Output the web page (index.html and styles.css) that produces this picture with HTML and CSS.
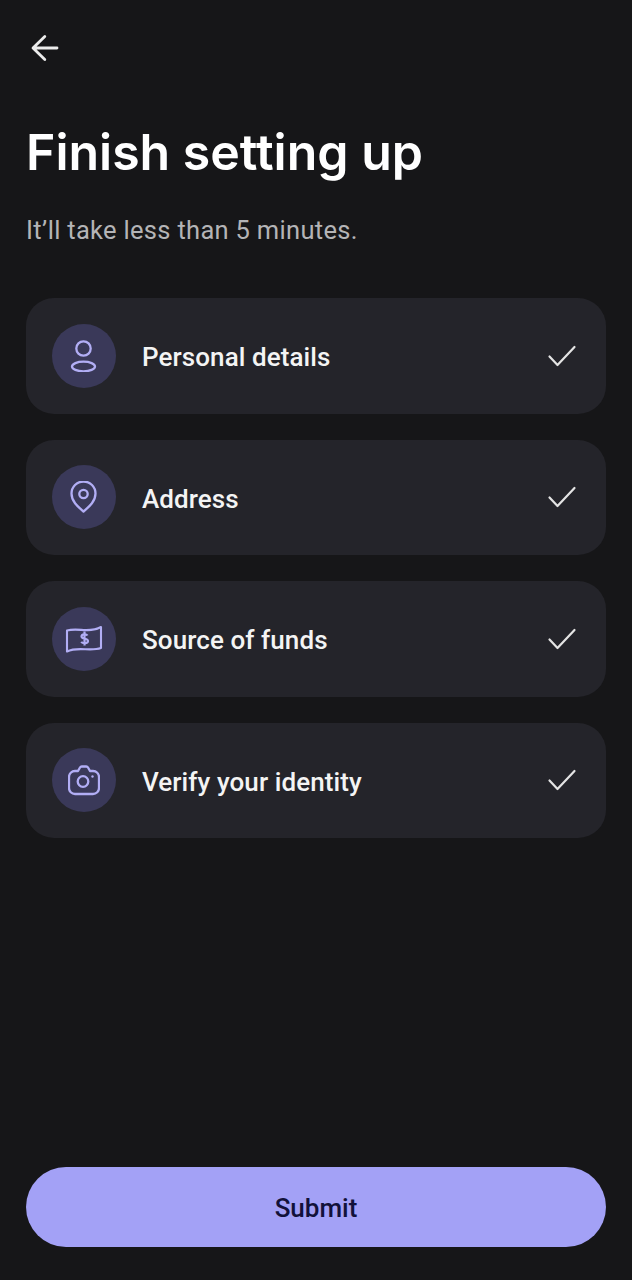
FILE: index.html
```html
<!DOCTYPE html>
<html>
	<head>
		<title>Finish setting up</title>
		<link rel="stylesheet" href="styles.css">
	</head>
	<body>
		<div class="screen">
			<svg class="back" viewBox="0 0 32 32" fill="none" stroke="#ececec" stroke-width="2.800" stroke-linecap="round" stroke-linejoin="round">
				<path d="M28 16H4.500M15.800 4.500 4 16l11.800 11.500"/>
			</svg>
			<h1 class="title">Finish setting up</h1>
			<p class="subtitle">It’ll take less than 5 minutes.</p>
			<div class="steps">
				<div class="step">
					<span class="step-icon">
						<svg viewBox="0 0 32 32" fill="none" stroke="#b2aef5" stroke-width="2.300">
							<circle cx="15.500" cy="8.500" r="7.200"/>
							<ellipse cx="15.500" cy="26.500" rx="11.500" ry="4.800"/>
						</svg>
					</span>
					<span class="step-name">Personal details</span>
					<svg class="check" viewBox="0 0 30 24" fill="none" stroke="#e4e4e4" stroke-width="2.200" stroke-linecap="round" stroke-linejoin="round"><path d="M2.500 12.500l8 8.500L27.500 3"/></svg>
				</div>
				<div class="step">
					<span class="step-icon">
						<svg viewBox="0 0 32 32" fill="none" stroke="#b2aef5" stroke-width="2.300">
							<path d="M15.500 30.500C9 25 3.500 20 3.500 12.500a12 12 0 0 1 24 0c0 7.500-5.500 12.500-12 18z" stroke-linejoin="round"/>
							<circle cx="15.500" cy="13" r="4.200"/>
						</svg>
					</span>
					<span class="step-name">Address</span>
					<svg class="check" viewBox="0 0 30 24" fill="none" stroke="#e4e4e4" stroke-width="2.200" stroke-linecap="round" stroke-linejoin="round"><path d="M2.500 12.500l8 8.500L27.500 3"/></svg>
				</div>
				<div class="step">
					<span class="step-icon">
						<svg class="wide" viewBox="0 0 38 30" fill="none" stroke="#b2aef5" stroke-width="2.100" stroke-linejoin="round">
							<path d="M2 6.500c11-3 23 3 34-3.500v21c-11 4-23-2-34 3.500z"/>
							<path d="M22.500 11.500c-1-1.500-6-1.800-6 1 0 3 6.500 1.500 6.500 4.500 0 2.800-5.500 2.500-6.800.8M19.500 7.500v14" stroke-width="2.200"/>
						</svg>
					</span>
					<span class="step-name">Source of funds</span>
					<svg class="check" viewBox="0 0 30 24" fill="none" stroke="#e4e4e4" stroke-width="2.200" stroke-linecap="round" stroke-linejoin="round"><path d="M2.500 12.500l8 8.500L27.500 3"/></svg>
				</div>
				<div class="step">
					<span class="step-icon">
						<svg viewBox="0 0 32 32" fill="none" stroke="#b2aef5" stroke-width="2.300" stroke-linejoin="round">
							<path d="M7 7h3l2-3.500c.4-.7 1-1 1.800-1h4.400c.8 0 1.400.3 1.800 1L22 7h3c3.300 0 6 2.700 6 6v11c0 3.300-2.700 6-6 6H7c-3.300 0-6-2.700-6-6V13c0-3.300 2.700-6 6-6z"/>
							<circle cx="15" cy="17.500" r="5.300"/>
							<circle cx="24.500" cy="12.500" r="1.200" fill="#b2aef5" stroke="none"/>
						</svg>
					</span>
					<span class="step-name">Verify your identity</span>
					<svg class="check" viewBox="0 0 30 24" fill="none" stroke="#e4e4e4" stroke-width="2.200" stroke-linecap="round" stroke-linejoin="round"><path d="M2.500 12.500l8 8.500L27.500 3"/></svg>
				</div>
			</div>
			<div class="button">Submit</div>
		</div>
	</body>
</html>
```

FILE: styles.css
```css
body{
	margin: 0;
	background: #161618;
	font-family: Roboto, sans-serif;
}
.screen{
	height: 1280px;
	box-sizing: border-box;
	padding: 32px 26px 33px;
	display: flex;
	flex-direction: column;
}
.back{
	display: block;
	width: 32px;
	height: 32px;
	margin-left: 3px;
}
.title{
	margin: 58px 0 0 0;
	font-family: Inter, sans-serif;
	font-size: 50px;
	font-weight: 600;
	line-height: 60px;
	color: #fff;
}
.subtitle{
	margin: 32px 0 0 0;
	font-size: 25.500px;
	line-height: 32px;
	letter-spacing: 0.3px;
	color: #b4b4b6;
}
.steps{
	margin-top: 52px;
	display: flex;
	flex-direction: column;
	gap: 26px;
}
.step{
	height: 115.500px;
	background: #24242a;
	border-radius: 28px;
	padding: 0 29px 0 26px;
	display: flex;
	align-items: center;
}
.step-icon{
	width: 64px;
	height: 64px;
	border-radius: 50%;
	background: #3a3959;
	display: flex;
	align-items: center;
	justify-content: center;
	margin-right: 26px;
}
.step-icon svg{
	width: 32px;
	height: 32px;
}
.step-icon svg.wide{
	width: 38px;
	height: 30px;
}
.step-name{
	flex: 1;
	padding-top: 3px;
	font-size: 26px;
	font-weight: 500;
	letter-spacing: 0.08px;
	color: #f4f4f4;
}
.check{
	width: 30px;
	height: 24px;
}
.button{
	margin-top: auto;
	height: 80px;
	line-height: 83px;
	border-radius: 40px;
	background: #a3a1f6;
	color: #12113a;
	font-size: 26px;
	font-weight: 500;
	text-align: center;
}
```
